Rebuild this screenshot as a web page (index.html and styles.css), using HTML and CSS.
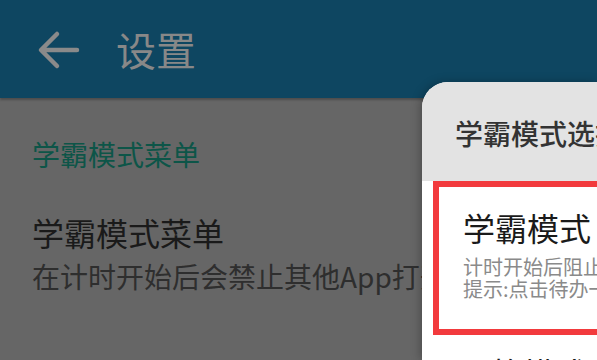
FILE: index.html
```html
<!DOCTYPE html>
<html lang="zh">
<head>
    <meta charset="UTF-8">
    <meta name="viewport" content="width=device-width, initial-scale=1.0">
    <title>设置</title>
    <link rel="stylesheet" href="styles.css">
</head>
<body>
    <div class="toolbar">
        <svg class="back" width="44" height="40" viewBox="0 0 44 40">
            <path d="M41 20 H6 M21 4 L5 20 L21 36" fill="none" stroke="#8a8a8a" stroke-width="4.5" stroke-linecap="round" stroke-linejoin="round"/>
        </svg>
        <span class="toolbar-title">设置</span>
    </div>

    <div class="prefs">
        <div class="category">学霸模式菜单</div>
        <div class="pref">
            <div class="pref-title">学霸模式菜单</div>
            <div class="pref-summary">在计时开始后会禁止其他App打开</div>
        </div>
    </div>

    <!-- 弹出的选择框 -->
    <div class="dialog">
        <div class="dialog-title">学霸模式选择</div>
        <div class="dialog-list">
            <div class="option selected">
                <div class="option-title">学霸模式</div>
                <div class="option-desc">计时开始后阻止其他应用打开<br>提示:点击待办一键开始</div>
            </div>
            <div class="option">
                <div class="option-title">严格模式</div>
            </div>
        </div>
    </div>
</body>
</html>
```

FILE: styles.css
```css
body {
    margin: 0;
    padding: 0;
    width: 597px;
    height: 360px;
    overflow: hidden;
    background: #666666;
    font-family: "Noto Sans CJK SC", "Noto Sans", sans-serif;
    position: relative;
}

.toolbar {
    height: 98px;
    background: #0e4661;
    box-shadow: 0 2px 2px rgba(0, 0, 0, 0.25);
    display: flex;
    align-items: center;
    padding-left: 36px;
}

.back {
    display: block;
    margin-top: 2px;
}

.toolbar-title {
    margin-left: 36px;
    font-size: 40px;
    line-height: 1;
    color: #888888;
}

.prefs {
    padding: 38px 0 0 32px;
}

.category {
    font-size: 28px;
    line-height: 36px;
    color: #0d5548;
}

.pref {
    margin-top: 40px;
    white-space: nowrap;
}

.pref-title {
    font-size: 32px;
    line-height: 40px;
    color: #1a1a1a;
}

.pref-summary {
    margin-top: 6px;
    font-size: 28px;
    line-height: 36px;
    color: #2e2e2e;
}

.dialog {
    position: absolute;
    left: 422px;
    top: 82px;
    width: 175px;
    height: 278px;
    background: #ffffff;
    border-top-left-radius: 26px;
    overflow: hidden;
    box-shadow: -2px 0 10px rgba(0, 0, 0, 0.25);
}

.dialog-title {
    height: 99px;
    background: #e3e3e3;
    padding-left: 33px;
    font-size: 28px;
    font-weight: 500;
    line-height: 102px;
    color: #333;
    white-space: nowrap;
}

.dialog-list {
    padding-left: 11px;
}

.option {
    padding-left: 26px;
    white-space: nowrap;
}

.option.selected {
    border: 6px solid #f23a3d;
    border-right: none;
    padding: 19px 0 0 24px;
    height: 123px;
}

.option-title {
    font-size: 32px;
    line-height: 42px;
    color: #1a1a1a;
}

.option-desc {
    margin-top: 8px;
    font-size: 20px;
    line-height: 22px;
    color: #8a8a8a;
}

.option + .option {
    padding-top: 16px;
}
```
